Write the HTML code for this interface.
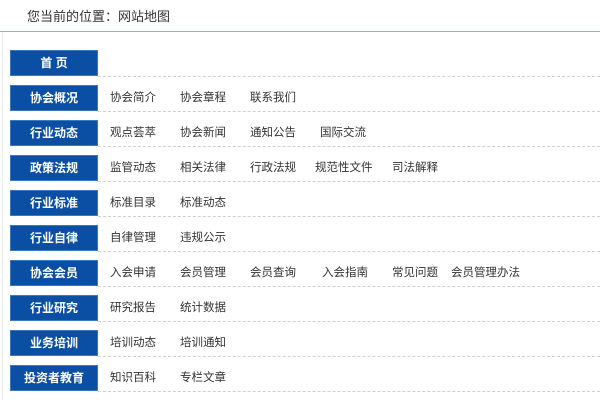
<!DOCTYPE html>
<html><head><meta charset="utf-8"><style>
body{margin:0;width:600px;height:400px;overflow:hidden;background:#fff;font-family:"Liberation Sans","Noto Sans CJK SC",sans-serif;font-size:12px;color:#333}
.hd{position:absolute;left:27px;top:6px;font-size:13px;color:#333}
.line{position:absolute;left:0;top:31px;width:600px;height:1px;background:#7bb8dd}
.lb{position:absolute;left:2px;top:32px;width:1px;height:368px;background:#eaeaea}
.row{position:absolute;left:10px;width:590px;height:27px}
.b{position:absolute;left:0;top:0;width:86px;height:24px;background:#0b4fa5;border:1px solid #3d78c0;color:#fff;font-weight:bold;text-align:center;line-height:24px;font-size:12px}
.d{position:absolute;left:88px;right:0;top:26px;border-top:1px dashed #d0d0d0}
.i{position:absolute;top:5px;line-height:16px;white-space:nowrap;font-size:11.5px}
</style></head><body>
<div class="hd">您当前的位置：网站地图</div>
<div class="line"></div><div class="lb"></div>

<div class="row" style="top:50px"><div class="b">首 页</div><div class="d"></div></div>
<div class="row" style="top:85px"><div class="b">协会概况</div><div class="d"></div>
<span class="i" style="left:100px">协会简介</span><span class="i" style="left:170px">协会章程</span><span class="i" style="left:240px">联系我们</span></div>
<div class="row" style="top:120px"><div class="b">行业动态</div><div class="d"></div>
<span class="i" style="left:100px">观点荟萃</span><span class="i" style="left:170px">协会新闻</span><span class="i" style="left:240px">通知公告</span><span class="i" style="left:310px">国际交流</span></div>
<div class="row" style="top:155px"><div class="b">政策法规</div><div class="d"></div>
<span class="i" style="left:100px">监管动态</span><span class="i" style="left:170px">相关法律</span><span class="i" style="left:240px">行政法规</span><span class="i" style="left:305px">规范性文件</span><span class="i" style="left:382px">司法解释</span></div>
<div class="row" style="top:190px"><div class="b">行业标准</div><div class="d"></div>
<span class="i" style="left:100px">标准目录</span><span class="i" style="left:170px">标准动态</span></div>
<div class="row" style="top:225px"><div class="b">行业自律</div><div class="d"></div>
<span class="i" style="left:100px">自律管理</span><span class="i" style="left:170px">违规公示</span></div>
<div class="row" style="top:260px"><div class="b">协会会员</div><div class="d"></div>
<span class="i" style="left:100px">入会申请</span><span class="i" style="left:170px">会员管理</span><span class="i" style="left:240px">会员查询</span><span class="i" style="left:312px">入会指南</span><span class="i" style="left:382px">常见问题</span><span class="i" style="left:441px">会员管理办法</span></div>
<div class="row" style="top:295px"><div class="b">行业研究</div><div class="d"></div>
<span class="i" style="left:100px">研究报告</span><span class="i" style="left:170px">统计数据</span></div>
<div class="row" style="top:330px"><div class="b">业务培训</div><div class="d"></div>
<span class="i" style="left:100px">培训动态</span><span class="i" style="left:170px">培训通知</span></div>
<div class="row" style="top:365px"><div class="b">投资者教育</div><div class="d"></div>
<span class="i" style="left:100px">知识百科</span><span class="i" style="left:170px">专栏文章</span></div>
</body></html>
